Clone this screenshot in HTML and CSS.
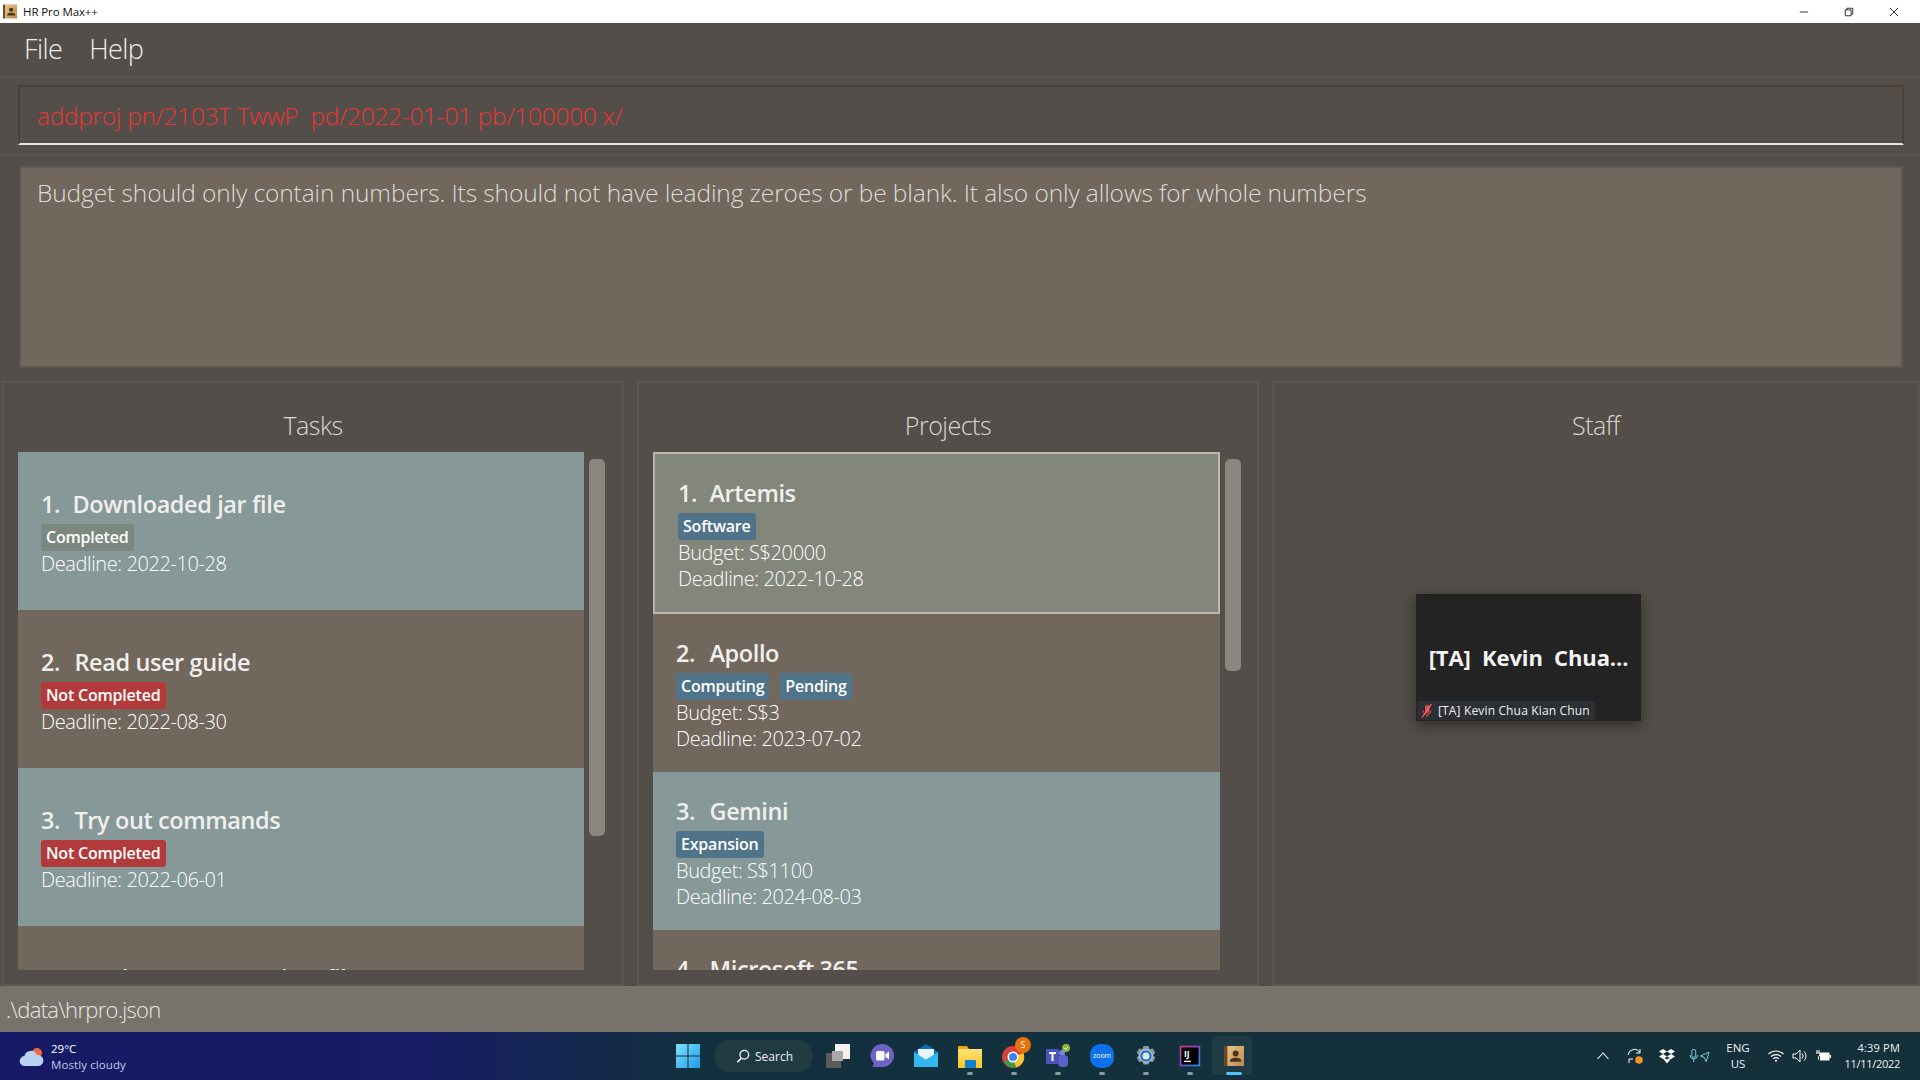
FILE: index.html
```html
<!DOCTYPE html>
<html lang="en">
<head>
<meta charset="utf-8">
<title>HR Pro Max++</title>
<link rel="stylesheet" href="styles.css">
</head>
<body>
<svg class="defs" width="0" height="0"><defs>
  <linearGradient id="appg" x1="0" y1="0" x2="1" y2="1"><stop offset="0" stop-color="#e9c48a"/><stop offset="1" stop-color="#b98a4e"/></linearGradient>
  <linearGradient id="fold" x1="0" y1="0" x2="0" y2="1"><stop offset="0" stop-color="#ffe27a"/><stop offset="1" stop-color="#f7c51e"/></linearGradient>
  <linearGradient id="win" x1="0" y1="0" x2="1" y2="1"><stop offset="0" stop-color="#7fe3ff"/><stop offset="1" stop-color="#1d9be8"/></linearGradient>
  <linearGradient id="ijb" x1="0" y1="0" x2="1" y2="1"><stop offset="0" stop-color="#e2377d"/><stop offset=".5" stop-color="#7b4fd0"/><stop offset="1" stop-color="#1f8fe8"/></linearGradient>
  <symbol id="appicon" viewBox="0 0 24 24">
    <rect x="0" y="0" width="4" height="24" fill="#6b4a24"/>
    <rect x="4" y="0" width="20" height="24" fill="url(#appg)"/>
    <circle cx="14" cy="9" r="3.6" fill="#4d3418"/>
    <path d="M7 19c0-4 3-5 7-5s7 1 7 5z" fill="#4d3418"/>
  </symbol>
</defs></svg>
<div class="page">
  <header class="titlebar">
    <div class="title-left">
      <svg class="title-icon"><use href="#appicon"/></svg>
      <span class="title-text">HR Pro Max++</span>
    </div>
    <div class="winctl">
      <svg class="wc" viewBox="0 0 12 12"><path d="M1 6h10" stroke="#111" fill="none"/></svg>
      <svg class="wc" viewBox="0 0 12 12"><path d="M1.500 3.500h7v7h-7zM3.500 3.500v-2h7v7h-2" stroke="#111" fill="none"/></svg>
      <svg class="wc" viewBox="0 0 12 12"><path d="M1 1l10 10M11 1L1 11" stroke="#111" fill="none"/></svg>
    </div>
  </header>

  <nav class="menubar"><span class="menu-item">File</span><span class="menu-item">Help</span></nav>

  <section class="command-panel">
    <div class="command-box">addproj pn/2103T TwwP&nbsp; pd/2022-01-01 pb/100000 x/</div>
  </section>

  <section class="result-panel">
    <div class="result-box">Budget should only contain numbers. Its should not have leading zeroes or be blank. It also only allows for whole numbers</div>
  </section>

  <main class="columns">
    <section class="column col-tasks">
      <h2 class="col-head">Tasks</h2>
      <div class="list-wrap">
        <div class="list">
          <article class="card teal"><h3 class="card-title"><span class="num-one">1.&nbsp;</span> Downloaded jar file</h3><div class="tags"><span class="tag done">Completed</span></div><p class="line">Deadline: 2022-10-28</p></article>
          <article class="card brown"><h3 class="card-title"><span class="num">2.&nbsp;</span> Read user guide</h3><div class="tags"><span class="tag notdone">Not Completed</span></div><p class="line">Deadline: 2022-08-30</p></article>
          <article class="card teal"><h3 class="card-title"><span class="num">3.&nbsp;</span> Try out commands</h3><div class="tags"><span class="tag notdone">Not Completed</span></div><p class="line">Deadline: 2022-06-01</p></article>
          <article class="card brown"><h3 class="card-title"><span class="num">4.&nbsp;</span> Load your own project file</h3><div class="tags"><span class="tag notdone">Not Completed</span></div><p class="line">Deadline: 2022-06-01</p></article>
        </div>
        <div class="track"><div class="thumb thumb-tasks"></div></div>
      </div>
    </section>

    <section class="column col-projects">
      <h2 class="col-head">Projects</h2>
      <div class="list-wrap">
        <div class="list">
          <article class="card pcard selected"><h3 class="card-title"><span class="num-one">1.&nbsp;</span> Artemis</h3><div class="tags"><span class="tag blue">Software</span></div><p class="line">Budget: S$20000</p><p class="line">Deadline: 2022-10-28</p></article>
          <article class="card pcard brown"><h3 class="card-title"><span class="num">2.&nbsp;</span> Apollo</h3><div class="tags"><span class="tag blue">Computing</span><span class="tag blue">Pending</span></div><p class="line">Budget: S$3</p><p class="line">Deadline: 2023-07-02</p></article>
          <article class="card pcard teal"><h3 class="card-title"><span class="num">3.&nbsp;</span> Gemini</h3><div class="tags"><span class="tag blue">Expansion</span></div><p class="line">Budget: S$1100</p><p class="line">Deadline: 2024-08-03</p></article>
          <article class="card pcard brown"><h3 class="card-title"><span class="num">4.&nbsp;</span> Microsoft 365</h3><div class="tags"><span class="tag blue">Software</span></div><p class="line">Budget: S$500</p><p class="line">Deadline: 2024-01-01</p></article>
        </div>
        <div class="track"><div class="thumb thumb-projects"></div></div>
      </div>
    </section>

    <section class="column col-staff">
      <h2 class="col-head">Staff</h2>
    </section>
  </main>

  <footer class="statusbar">.\data\hrpro.json</footer>

  <div class="taskbar">
    <div class="weather">
      <svg class="weather-icon" viewBox="0 0 26 24"><circle cx="18" cy="8" r="5" fill="#f4683a"/><path d="M6 21a5 5 0 0 1-.6-10 6.500 6.500 0 0 1 12.400-1 5.500 5.500 0 0 1 2 11z" fill="#b9d3f5"/></svg>
      <div class="weather-text"><span class="temp">29°C</span><span class="cond">Mostly cloudy</span></div>
    </div>
    <div class="tb-apps">
      <svg class="tb-win" viewBox="0 0 24 24"><path fill="url(#win)" d="M0 0h11.500v11.500H0zM12.500 0H24v11.500H12.500zM0 12.500h11.500V24H0zM12.500 12.500H24V24H12.500z"/></svg>
      <div class="search"><svg class="search-icon" viewBox="0 0 16 16"><circle cx="9.500" cy="6.500" r="5" fill="none" stroke="#fff" stroke-width="1.400"/><path d="M6 10.500L1.500 15" stroke="#fff" stroke-width="1.800"/></svg><span>Search</span></div>
      <div class="app"><svg viewBox="0 0 24 24"><rect x="9" y="0" width="15" height="15" fill="#f2f2f2"/><rect x="0" y="9" width="15" height="15" fill="#5c5c5c"/><rect x="6" y="7" width="11" height="10" fill="#a8a8a8"/></svg></div>
      <div class="app"><svg viewBox="0 0 24 24"><path d="M12 0a12 11.500 0 0 1 0 23H2.500l1.500-3.500A12 11.500 0 0 1 12 0z" fill="#6d63c4"/><rect x="6" y="7" width="8.500" height="9.500" rx="1.500" fill="#fff"/><path d="M15.500 10l3.500-2.500v8L15.500 13z" fill="#fff"/></svg></div>
      <div class="app"><svg viewBox="0 0 24 24"><path d="M0 8L12 0l12 8v15H0z" fill="#0f6cbd"/><path d="M4 5h16v6l-8 5-8-5z" fill="#e8f6ff"/><path d="M0 8l12 8 12-8v15H0z" fill="#34b7f1"/></svg></div>
      <div class="app dot"><svg viewBox="0 0 24 24"><path d="M0 2h9l2 3H0z" fill="#e6a50d"/><rect x="0" y="5" width="24" height="19" fill="url(#fold)"/><rect x="7" y="16" width="11" height="8" rx="1" fill="#0f7fd0"/></svg></div>
      <div class="app dot"><svg viewBox="0 0 24 24"><circle cx="11" cy="13" r="11" fill="#d9423a"/><path d="M11 13L2 18a11 11 0 0 0 12 5.500z" fill="#3b9a4a"/><path d="M11 13l3 10.500A11 11 0 0 0 21.500 9z" fill="#f7c52d"/><circle cx="11" cy="13" r="5.500" fill="#fff"/><circle cx="11" cy="13" r="4" fill="#3f85e8"/></svg><span class="badge">S</span></div>
      <div class="app dot"><svg viewBox="0 0 24 24"><circle cx="16" cy="9" r="3" fill="#7b83eb"/><rect x="12" y="11" width="10" height="12" rx="4" fill="#5b5fc7"/><rect x="0" y="5" width="13" height="15" rx="1" fill="#4b53bc"/><path d="M3 8h7v2H7.500v7h-2v-7H3z" fill="#fff"/><circle cx="20" cy="4" r="4" fill="#8db63b"/><path d="M18 4l1.500 1.500L22 3" stroke="#fff" stroke-width="1" fill="none"/></svg></div>
      <div class="app dot"><svg viewBox="0 0 24 24"><rect width="24" height="24" rx="10" fill="#0e71eb"/><text class="zoom-word" x="12" y="14" text-anchor="middle">zoom</text></svg></div>
      <div class="app dot"><svg viewBox="0 0 24 24"><path d="M9.500 1h5l1 3.200 3.300-.8 2.500 4.300-2.300 2.500 2.300 2.600-2.500 4.300-3.300-.8-1 3.200-5 0-1-3.200-3.300.8-2.500-4.300 2.300-2.600-2.300-2.500 2.500-4.300 3.300.8z" transform="translate(0 1)" fill="#8f9aa3"/><circle cx="12" cy="12" r="6" fill="#1e6fc0"/><circle cx="12" cy="12" r="3.500" fill="#dfe8ef"/><circle cx="12" cy="12" r="6.200" fill="none" stroke="#dfe8ef" stroke-width=".8"/></svg></div>
      <div class="app dot"><svg viewBox="-2 -2 28 28"><rect x="1" y="1" width="22" height="22" fill="#000" stroke="url(#ijb)" stroke-width="2"/><text class="ij-word" x="5" y="13">IJ</text><rect x="5" y="17.500" width="8" height="1.500" fill="#fff"/></svg></div>
      <div class="app active"><svg><use href="#appicon"/></svg></div>
    </div>
    <div class="tray">
      <svg class="ti-chev" viewBox="0 0 12 8"><path d="M.5 7L6 1l5.500 6" stroke="#fff" fill="none" stroke-width="1.100"/></svg>
      <svg class="ti-sync" viewBox="0 0 16 16"><path d="M1 7a6.500 6.500 0 0 1 12-2.500M13 1v4h-4M2 11v4M2 11h4" stroke="#fff" fill="none" stroke-width="1"/><circle cx="12" cy="12" r="3.800" fill="#f7941d"/></svg>
      <svg class="ti-drop" viewBox="0 0 16 15"><path d="M4 0L8 2.500 4 5 0 2.500zM12 0l4 2.500L12 5 8 2.500zM4 5l4 2.500L4 10 0 7.500zM12 5l4 2.500-4 2.500-4-2.500zM8 10.500l4-2 0 1-4 5-4-5 0-1z" fill="#fff"/></svg>
      <svg class="ti-mic" viewBox="0 0 22 14"><rect x="3" y="0" width="4" height="8.500" rx="2" fill="none" stroke="#7fd3e8"/><path d="M1 6a4 4 0 0 0 8 0M5 10v3.500" fill="none" stroke="#7fd3e8"/><path d="M21 3l-9 4 4 1.500 2 4.500z" fill="none" stroke="#7fd3e8"/></svg>
      <div class="lang"><span>ENG</span><span>US</span></div>
      <svg class="ti-wifi" viewBox="0 0 16 12"><path d="M.5 4a11 11 0 0 1 15 0M3 6.500a7.500 7.500 0 0 1 10 0M5.300 8.800a4 4 0 0 1 5.400 0" stroke="#fff" fill="none" stroke-width="1.100"/><circle cx="8" cy="10.800" r="1" fill="#fff"/></svg>
      <svg class="ti-vol" viewBox="0 0 16 14"><path d="M1 5h3l4-4v12l-4-4H1z M10 4.500a3.500 3.500 0 0 1 0 5M12 2.500a6 6 0 0 1 0 9" stroke="#fff" fill="none"/></svg>
      <svg class="ti-bat" viewBox="0 0 16 12"><rect x="5" y="2.500" width="9.500" height="8" fill="#fff"/><rect x="14.500" y="5" width="1.500" height="3" fill="#fff"/><path d="M2 0v3M4 0v3M1 3h4v2L3.500 6.500v3" stroke="#fff" fill="none"/></svg>
      <div class="clock"><span class="time">4:39 PM</span><span class="date">11/11/2022</span></div>
    </div>
  </div>

  <aside class="zoomwin">
    <div class="zoomname">[TA]&nbsp; Kevin&nbsp; Chua...</div>
    <div class="zoomlabel">
      <svg class="zoommic" viewBox="0 0 12 14"><rect x="4" y="1" width="4.500" height="8" rx="2" fill="#e5484d"/><path d="M2 6.500a4 4 0 0 0 8 0M6 10.500V13" stroke="#e5484d" fill="none"/><path d="M10.500 0L1 13.500" stroke="#ff6a6a" stroke-width="1.200"/></svg>
      <span>[TA] Kevin Chua Kian Chun</span>
    </div>
  </aside>
</div>
</body>
</html>
```
FILE: styles.css
```css
* { box-sizing: border-box; margin: 0; padding: 0; }
html, body { width: 1920px; height: 1080px; overflow: hidden; }
body { font-family: "Open Sans", "Liberation Sans", sans-serif; background: #534e49; color: #fff; }
.defs { position: absolute; }
.page { position: relative; display: flex; flex-direction: column; width: 1920px; height: 1080px; }

.titlebar { height: 23px; flex: none; background: #fff; display: flex; justify-content: space-between; align-items: center; color: #111; }
.title-left { display: flex; align-items: center; }
.title-icon { width: 14px; height: 15px; margin-left: 3px; }
.title-text { margin-left: 6px; font-size: 11.500px; letter-spacing: -.1px; }
.winctl { display: flex; gap: 35px; margin-right: 21px; }
.wc { width: 10px; height: 10px; display: block; }

.menubar { height: 53px; flex: none; display: flex; align-items: center; padding: 0 0 2px 24px; gap: 27px; background: #534e49; }
.menu-item { font-size: 27px; font-weight: 300; color: #efeeec; letter-spacing: -.6px; }

.command-panel { height: 78px; flex: none; border-top: 2px solid #5a5651; padding: 7px 16px 6px 18px; }
.command-box { height: 60px; border: 2px solid #4a403a; border-bottom: 2px solid #e6e6e4; padding: 0 0 0 17px; display: flex; align-items: center; font-size: 24.500px; font-weight: 300; color: #ee3333; letter-spacing: -.3px; white-space: nowrap; }

.result-panel { height: 226px; flex: none; border-top: 2px solid #5a5651; padding: 10px 17px 0 19px; }
.result-box { height: 202px; background: #71675d; border: 2px solid #5e5851; padding: 8px 0 0 16px; font-size: 24.500px; font-weight: 300; color: #dedcd7; letter-spacing: -.1px; white-space: nowrap; }

.columns { height: 606px; flex: none; display: flex; gap: 13px; padding: 1px 0 0 2px; }
.column { display: flex; flex-direction: column; border: 2px solid #5a5651; }
.col-tasks { width: 622px; padding: 0 14px; }
.col-projects { width: 622px; padding: 0 14px; }
.col-staff { flex: 1; }
.col-head { height: 69px; flex: none; padding-top: 25px; text-align: center; font-size: 25px; line-height: 34px; font-weight: 300; color: #d9d7d3; letter-spacing: -.5px; }

.list-wrap { display: flex; height: 518px; }
.list { width: 566px; height: 518px; overflow: hidden; flex: none; }
.col-projects .list { width: 567px; }
.track { flex: 1; padding: 7px 0 0 5px; }
.thumb { width: 16px; background: #8a857e; border-radius: 5px; }
.thumb-tasks { height: 377px; }
.thumb-projects { height: 212px; }

.card { height: 158px; padding: 36px 0 0 23px; display: flex; flex-direction: column; color: #e6e5e2; }
.pcard { padding-top: 23px; }
.teal { background: #869897; }
.brown { background: #71675d; }
.selected { height: 162px; background: #83867a; border: 2px solid #b6baa6; padding-left: 23px; }
.card-title { font-size: 23.500px; line-height: 33px; font-weight: 600; color: #f0efed; letter-spacing: -.4px; }
.num { margin-right: 3px; }
.num-one { margin-right: 1px; }
.tags { display: flex; gap: 11px; margin-top: 3px; }
.tag { height: 27px; padding: 0 5px; border-radius: 3px; font-size: 16px; line-height: 27px; font-weight: 600; color: #fff; letter-spacing: -.2px; }
.done { background: #7c8780; }
.notdone { background: #b33a3a; }
.blue { background: #4f7389; }
.line { font-size: 20px; line-height: 26px; font-weight: 300; color: #ffffff; letter-spacing: -.4px; }

.statusbar { height: 46px; flex: none; background: #77736b; display: flex; align-items: center; padding-left: 6px; font-size: 22px; font-weight: 300; color: #e8e6e2; letter-spacing: -.7px; }

.taskbar { height: 48px; flex: none; display: flex; align-items: center; background: linear-gradient(90deg, #161a66 0, #161d63 22%, #13303f 36%, #14303a 100%); position: relative; }
.weather { width: 676px; flex: none; display: flex; align-items: center; padding: 2px 0 0 19px; gap: 6px; }
.weather-icon { width: 26px; height: 24px; }
.weather-text { display: flex; flex-direction: column; font-size: 11.500px; line-height: 16px; }
.temp { color: #fff; }
.cond { color: #c3c9e4; letter-spacing: .1px; }
.tb-apps { display: flex; align-items: center; width: 899px; flex: none; }
.tb-win { width: 24px; height: 24px; }
.search { width: 99px; height: 32px; margin: 0 13px 0 14px; border-radius: 16px; background: #203a42; display: flex; align-items: center; padding-left: 22px; gap: 5px; font-size: 12px; color: #eef; }
.search-icon { width: 14px; height: 14px; }
.app { position: relative; width: 24px; height: 24px; margin-right: 20px; flex: none; }
.app svg { display: block; width: 24px; height: 24px; }
.dot::after { content: ""; position: absolute; left: 9px; top: 28px; width: 6px; height: 3px; border-radius: 2px; background: #8c9a9e; }
.active::before { content: ""; position: absolute; left: -10px; top: -8px; width: 40px; height: 39px; border-radius: 4px; background: #1f3a42; z-index: 0; }
.active svg { position: relative; width: 20px; height: 20px; margin: 2px; }
.active::after { content: ""; position: absolute; left: 4px; top: 28px; width: 16px; height: 3px; border-radius: 2px; background: #4cc2ff; }
.badge { position: absolute; right: -5px; top: -7px; width: 16px; height: 16px; border-radius: 50%; background: #e8710a; font-size: 9px; line-height: 16px; text-align: center; color: #fff; }
.zoom-word { font-size: 7px; fill: #fff; font-family: "Open Sans", sans-serif; }
.ij-word { font-size: 10px; font-weight: 700; fill: #fff; font-family: "Open Sans", sans-serif; }

.tray { flex: 1; display: flex; align-items: center; padding-left: 22px; position: relative; }
.ti-chev { width: 12px; height: 8px; margin-right: 18px; }
.ti-sync { width: 16px; height: 16px; margin-right: 16px; }
.ti-drop { width: 16px; height: 15px; margin-right: 14px; }
.ti-mic { width: 21px; height: 14px; margin-right: 16px; }
.lang { width: 24px; display: flex; flex-direction: column; align-items: center; font-size: 11.500px; line-height: 16px; color: #f0f0f0; margin-right: 18px; }
.ti-wifi { width: 16px; height: 12px; margin-right: 8px; }
.ti-vol { width: 16px; height: 14px; margin-right: 7px; }
.ti-bat { width: 16px; height: 12px; }
.clock { margin-left: auto; margin-right: 20px; display: flex; flex-direction: column; align-items: flex-end; font-size: 11px; line-height: 16px; color: #f0f0f0; }
.time { letter-spacing: .2px; }
.date { letter-spacing: -.3px; }

.zoomwin { position: absolute; left: 1416px; top: 594px; width: 225px; height: 127px; background: #232323; box-shadow: 0 4px 14px rgba(0,0,0,.45); display: flex; flex-direction: column; }
.zoomname { flex: 1; display: flex; align-items: center; justify-content: center; padding-top: 18px; font-size: 22px; font-weight: 700; color: #f2f2f2; letter-spacing: -.1px; white-space: nowrap; }
.zoomlabel { width: 178px; height: 19px; margin: 0 0 1px 1px; background: #2c2f33; display: flex; align-items: center; gap: 5px; padding-left: 4px; font-size: 12px; letter-spacing: .15px; color: #f0f0f0; white-space: nowrap; }
.zoommic { width: 12px; height: 14px; flex: none; }
```
